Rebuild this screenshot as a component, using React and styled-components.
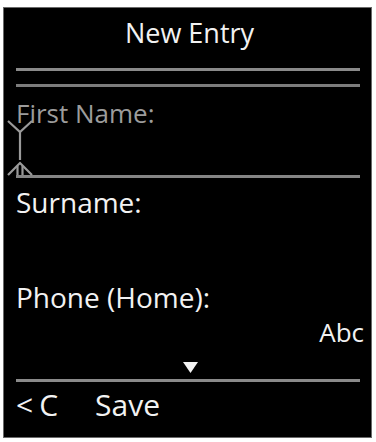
import React from 'react';
import styled, { createGlobalStyle } from 'styled-components';

const GlobalStyle = createGlobalStyle`
  html, body {
    margin: 0;
    padding: 0;
    background: #ffffff;
  }
  body {
    font-family: "Open Sans", "Noto Sans", sans-serif;
  }
`;

const Screen = styled.div`
  box-sizing: border-box;
  width: 369px;
  height: 431px;
  margin: 7px 0 0 3px;
  background: #000;
  border: 1px solid #6a6a6a;
  padding: 0 11px 0 12px;
  display: flex;
  flex-direction: column;
  color: #f2f2f2;
`;

const Header = styled.div`
  box-sizing: border-box;
  height: 60px;
  padding-top: 7px;
  text-align: center;
  font-size: 27px;
  line-height: 36px;
  padding-left: 3px;
`;

const Rule = styled.div`
  height: 3px;
  flex: none;
  background: ${p => p.$tone || '#8a8a8a'};
  margin-top: ${p => p.$gap || 0}px;
`;

const Field = styled.div`
  position: relative;
  box-sizing: border-box;
  height: 88px;
  padding-top: 10px;
`;

const Label = styled.div`
  font-size: ${p => p.$size || 28}px;
  line-height: ${p => p.$lh || 36}px;
  margin-top: ${p => p.$gap || 0}px;
  color: ${p => (p.$dim ? '#9c9c9c' : '#f2f2f2')};
  white-space: nowrap;
`;

const Cursor = styled.svg`
  position: absolute;
  left: -10px;
  top: 31px;
`;

const Mode = styled.div`
  font-size: 26px;
  line-height: 32px;
  margin-top: 1px;
  margin-right: -4px;
  text-align: right;
`;

const ArrowRow = styled.div`
  display: flex;
  justify-content: center;
  padding-left: 5px;
  margin-top: 14px;
  height: 11px;
`;

const Footer = styled.div`
  display: flex;
  align-items: baseline;
  margin-top: 3px;
  font-size: 30px;
  line-height: 40px;
`;

const Key = styled.span`
  margin-left: ${p => p.$gap || 0}px;
`;

export default function App() {
  return (
    <>
      <GlobalStyle />
      <Screen>
        <Header>New Entry</Header>
        <Rule />
        <Rule $gap={13} $tone="#7c7c7c" />
        <Field>
          <Label $dim $size={26} $lh={32}>First Name:</Label>
          <Cursor width="30" height="60" viewBox="0 0 30 60" fill="none" stroke="#9a9a9a" strokeWidth="2.2">
            <path d="M2 3 L14 14 L26 3" />
            <path d="M14 14 L14 42" />
            <path d="M2 57 L14 45 L26 57" />
            <path d="M11.5 48 L11.5 57 M16.5 48 L16.5 57" />
          </Cursor>
        </Field>
        <Rule $tone="#858585" />
        <Label $gap={6}>Surname:</Label>
        <Label $gap={59}>Phone (Home):</Label>
        <Mode>Abc</Mode>
        <ArrowRow>
          <svg width="15" height="11" viewBox="0 0 15 11">
            <path d="M0 0 H15 L7.5 11 Z" fill="#f2f2f2" />
          </svg>
        </ArrowRow>
        <Rule $gap={6} />
        <Footer>
          <Key>&lt;</Key>
          <Key $gap={6}>C</Key>
          <Key $gap={37}>Save</Key>
        </Footer>
      </Screen>
    </>
  );
}
